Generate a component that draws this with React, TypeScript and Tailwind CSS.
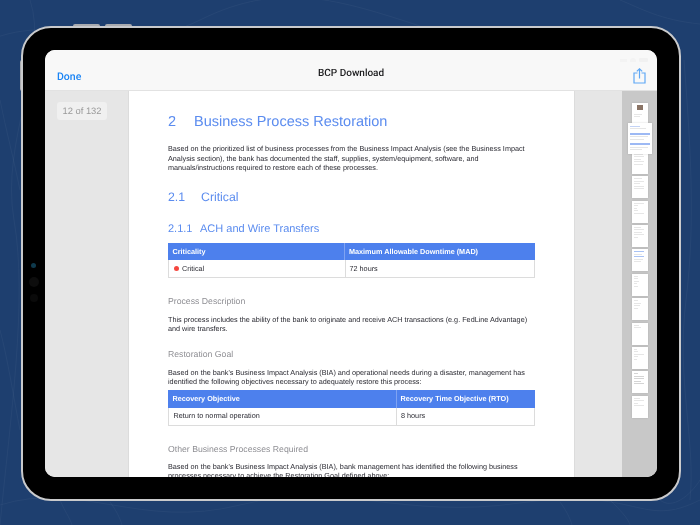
const wallpaperLines = [
  'M-10 40 C 60 10, 120 60, 200 20 S 340 0, 420 26',
  'M30 0 C 50 60, 0 140, 14 220 S 10 420, 0 525',
  'M0 505 C 80 480, 140 530, 240 505 S 400 520, 520 503 S 640 530, 700 500',
  'M60 500 C 64 510, 70 518, 72 525',
  'M110 502 C 116 510, 120 518, 122 525',
  'M560 502 C 566 510, 570 518, 572 525',
  'M610 500 C 620 510, 628 518, 630 525',
  'M684 60 C 690 140, 696 220, 686 300 S 696 440, 690 500',
  'M620 0 C 640 8, 660 20, 700 24',
  'M660 500 C 672 510, 690 496, 700 480',
  'M0 100 C 6 130, 14 160, 20 190',
  'M0 330 C 8 360, 14 400, 20 430',
]

type ThumbLine = { w: string; tone?: 'blue' | 'dark' }

const thumbPages: ThumbLine[][] = [
  [{ w: 'w-[70%]' }, { w: 'w-[50%]' }],
  [],
  [{ w: 'w-[80%]' }, { w: 'w-[85%]' }, { w: 'w-[60%]' }, { w: 'w-[85%]' }, { w: 'w-[75%]' }],
  [{ w: 'w-[70%]' }, { w: 'w-[85%]' }, { w: 'w-[50%]' }, { w: 'w-[85%]' }, { w: 'w-[85%]' }],
  [{ w: 'w-[85%]' }, { w: 'w-[40%]' }, { w: 'w-[30%]' }, { w: 'w-[35%]' }, { w: 'w-[85%]' }],
  [{ w: 'w-[60%]' }, { w: 'w-[85%]' }, { w: 'w-[70%]' }, { w: 'w-[85%]' }, { w: 'w-[40%]' }],
  [{ w: 'w-[85%]', tone: 'blue' }, { w: 'w-[70%]' }, { w: 'w-[85%]', tone: 'blue' }, { w: 'w-[80%]' }, { w: 'w-[60%]' }],
  [{ w: 'w-[40%]' }, { w: 'w-[35%]' }, { w: 'w-[45%]' }, { w: 'w-[30%]' }, { w: 'w-[40%]' }],
  [{ w: 'w-[35%]' }, { w: 'w-[60%]' }, { w: 'w-[50%]' }, { w: 'w-[40%]' }],
  [{ w: 'w-[45%]' }, { w: 'w-[60%]' }],
  [{ w: 'w-[30%]' }, { w: 'w-[40%]' }, { w: 'w-[85%]' }, { w: 'w-[40%]' }, { w: 'w-[30%]' }],
  [{ w: 'w-[40%]', tone: 'dark' }, { w: 'w-[85%]', tone: 'dark' }, { w: 'w-[85%]', tone: 'dark' }, { w: 'w-[60%]', tone: 'dark' }, { w: 'w-[85%]', tone: 'dark' }],
  [{ w: 'w-[50%]' }, { w: 'w-[85%]' }, { w: 'w-[40%]' }, { w: 'w-[85%]' }],
]

function Thumb({ lines, index }: { lines: ThumbLine[]; index: number }) {
  if (index === 1) {
    return (
      <div className="relative z-10 -my-[4.5px] -mx-[4px] h-[31px] w-[24px] shrink-0 bg-white shadow-[0_0_2px_rgba(0,0,0,0.15)] flex flex-col gap-[1.5px] px-[2px] pt-[3px]">
        <div className="h-px w-[50%] bg-[#c3d3f6]" />
        <div className="h-px w-[80%] bg-[#e6e6e6]" />
        <div className="mt-[2px] h-[2px] w-full bg-[#9db9f4]" />
        <div className="h-px w-[90%] bg-[#e6e6e6]" />
        <div className="h-px w-[70%] bg-[#e6e6e6]" />
        <div className="mt-[2px] h-[2px] w-full bg-[#9db9f4]" />
        <div className="h-px w-[90%] bg-[#e6e6e6]" />
        <div className="h-px w-[60%] bg-[#e6e6e6]" />
      </div>
    )
  }
  return (
    <div className="h-[22px] w-[16px] shrink-0 bg-white shadow-[0_0_2px_rgba(0,0,0,0.12)] flex flex-col gap-[1.5px] px-[2px] pt-[2px]">
      {index === 0 && <div className="mx-auto mb-[2px] h-[5px] w-[6px] bg-[#8a7466]" />}
      {lines.map((l, i) => (
        <div
          key={i}
          className={`h-px ${l.w} ${l.tone === 'blue' ? 'bg-[#a8c2f5]' : l.tone === 'dark' ? 'bg-[#d4d4d4]' : 'bg-[#e6e6e6]'}`}
        />
      ))}
    </div>
  )
}

function PageTable({ head, row, col }: { head: [string, string]; row: React.ReactNode; col: string }) {
  return (
    <div className="w-[367px] text-[7.26px] leading-[9.5px]">
      <div className="flex h-[17.5px] items-center bg-[#4d80ed] font-bold text-white">
        <div className={`${col} pl-[4.5px] border-r border-[#7fa3f2] h-full flex items-center`}>{head[0]}</div>
        <div className="pl-[4px]">{head[1]}</div>
      </div>
      <div className="flex h-[18px] items-center border border-t-0 border-[#dcdcdc] text-[#2c2c34]">
        {row}
      </div>
    </div>
  )
}

function Body({ lines, className }: { lines: string[]; className: string }) {
  return (
    <div className={`text-[7.26px] leading-[9.5px] text-[#2c2c34] whitespace-nowrap ${className}`}>
      {lines.map((l) => (
        <div key={l}>{l}</div>
      ))}
    </div>
  )
}

export default function App() {
  return (
    <div className="relative h-[525px] w-[700px] overflow-hidden bg-[#1e3f6f] pl-[21px] pt-[26px] font-['Liberation_Sans',Arial,sans-serif] [text-rendering:geometricPrecision]">
      <svg className="absolute inset-0" width="700" height="525" fill="none" stroke="#ffffff" strokeOpacity="0.04">
        {wallpaperLines.map((d) => (
          <path key={d} d={d} />
        ))}
      </svg>

      <div className="relative h-[475px] w-[660px]">
        {/* volume + power buttons */}
        <div className="absolute -top-[2px] left-[52px] h-[3px] w-[27px] rounded-t-[2px] bg-[#a9abb0]" />
        <div className="absolute -top-[2px] left-[84px] h-[3px] w-[27px] rounded-t-[2px] bg-[#a9abb0]" />
        <div className="absolute -left-[1px] top-[34px] h-[31px] w-[2px] rounded-l-[2px] bg-[#a9abb0]" />

        <div className="relative h-full w-full rounded-[30px] border-[2px] border-[#c9cacc] bg-black p-[22px]">
          {/* camera + sensors */}
          <div className="absolute left-[8px] top-[235px] h-[5px] w-[5px] rounded-full bg-[#0f3a4d]" />
          <div className="absolute left-[6px] top-[249px] h-[10px] w-[10px] rounded-full bg-[#0d0d0d]" />
          <div className="absolute left-[7px] top-[266px] h-[8px] w-[8px] rounded-full bg-[#0a0a0a]" />

          <div className="flex h-[427px] w-[612px] flex-col overflow-hidden rounded-[10px] bg-white">
            <header className="relative flex h-[41px] shrink-0 items-center justify-between border-b border-[#e2e2e2] bg-[#f8f8f8] pl-[12px] pr-[11px]">
              <span className="mt-[13px] font-['Roboto',sans-serif] text-[10.5px] font-medium text-[#1a84f5] blur-[0.25px]">Done</span>
              <span className="absolute left-[273px] top-[18px] font-['Roboto',sans-serif] text-[10px] leading-[12px] font-medium text-[#1c1c1e] blur-[0.25px]">
                BCP Download
              </span>
              <svg className="mt-[11px]" width="13" height="16" viewBox="0 0 13 16" fill="none" stroke="#5fa8f5" strokeWidth="1.2">
                <path d="M4.5 5H1v10h11V5H8.5" />
                <path d="M6.5 10.5V1M3.8 3.4 6.5.8l2.7 2.6" />
              </svg>
              {/* status icons */}
              <div className="absolute right-[9px] top-[8px] flex items-center gap-[3px] opacity-70">
                <div className="h-[3px] w-[7px] bg-[#f1f1f1]" />
                <div className="h-[4px] w-[6px] rounded-t-full bg-[#f1f1f1]" />
                <div className="h-[4px] w-[9px] rounded-[1px] bg-[#eeeeee]" />
              </div>
            </header>

            <div className="flex min-h-0 flex-1">
              <aside className="w-[84px] shrink-0 border-r border-[#dcdcdc] bg-[#e6e6e6] pl-[12px] pt-[11px]">
                <div className="flex h-[18px] w-[50px] items-center justify-center rounded-[3px] bg-[#f0f0f0] text-[9.4px] text-[#9a9a9a] blur-[0.25px]">
                  12 of 132
                </div>
              </aside>

              <main className="w-[445px] shrink-0 overflow-hidden bg-white pl-[39px] pt-[22px] blur-[0.25px]">
                <h1 className="flex h-[18px] items-center text-[14.5px] leading-[18px] text-[#5b8cef]">
                  <span className="w-[26px]">2</span>
                  <span>Business Process Restoration</span>
                </h1>
                <Body
                  className="mt-[13px]"
                  lines={[
                    'Based on the prioritized list of business processes from the Business Impact Analysis (see the Business Impact',
                    'Analysis section), the bank has documented the staff, supplies, system/equipment, software, and',
                    'manuals/instructions required to restore each of these processes.',
                  ]}
                />
                <h2 className="mt-[16px] flex h-[16px] items-center text-[12.3px] leading-[16px] text-[#5b8cef]">
                  <span className="w-[33px]">2.1</span>
                  <span>Critical</span>
                </h2>
                <h3 className="mt-[17px] flex h-[14px] items-center text-[11px] leading-[14px] text-[#5b8cef]">
                  <span className="w-[32px]">2.1.1</span>
                  <span>ACH and Wire Transfers</span>
                </h3>
                <div className="mt-[7px]">
                  <PageTable
                    col="w-[177px]"
                    head={['Criticality', 'Maximum Allowable Downtime (MAD)']}
                    row={
                      <>
                        <div className="flex h-full w-[176.5px] items-center gap-[3px] border-r border-[#dcdcdc] pl-[5px]">
                          <span className="h-[5px] w-[5px] rounded-full bg-[#f5473f]" />
                          Critical
                        </div>
                        <div className="pl-[4px]">72 hours</div>
                      </>
                    }
                  />
                </div>
                <h4 className="mt-[18px] text-[8.7px] leading-[11px] text-[#8e8e93]">Process Description</h4>
                <Body
                  className="mt-[7.5px]"
                  lines={[
                    'This process includes the ability of the bank to originate and receive ACH transactions (e.g. FedLine Advantage)',
                    'and wire transfers.',
                  ]}
                />
                <h4 className="mt-[15.5px] text-[8.7px] leading-[11px] text-[#8e8e93]">Restoration Goal</h4>
                <Body
                  className="mt-[7.5px]"
                  lines={[
                    "Based on the bank's Business Impact Analysis (BIA) and operational needs during a disaster, management has",
                    'identified the following objectives necessary to adequately restore this process:',
                  ]}
                />
                <div className="mt-[3.5px]">
                  <PageTable
                    col="w-[228.5px]"
                    head={['Recovery Objective', 'Recovery Time Objective (RTO)']}
                    row={
                      <>
                        <div className="flex h-full w-[228px] items-center border-r border-[#dcdcdc] pl-[4.5px]">
                          Return to normal operation
                        </div>
                        <div className="pl-[4px]">8 hours</div>
                      </>
                    }
                  />
                </div>
                <h4 className="mt-[18px] text-[8.7px] leading-[11px] text-[#8e8e93]">Other Business Processes Required</h4>
                <Body
                  className="mt-[7px]"
                  lines={[
                    "Based on the bank's Business Impact Analysis (BIA), bank management has identified the following business",
                    'processes necessary to achieve the Restoration Goal defined above:',
                  ]}
                />
              </main>

              <aside className="min-w-0 flex-1 border-l border-[#dcdcdc] bg-[#e6e6e6]" />
              <div className="flex w-[35px] shrink-0 flex-col items-center gap-[2.4px] bg-[#c8c8c8] pt-[12px]">
                {thumbPages.map((lines, i) => (
                  <Thumb key={i} lines={lines} index={i} />
                ))}
              </div>
            </div>
          </div>
        </div>
      </div>
    </div>
  )
}
